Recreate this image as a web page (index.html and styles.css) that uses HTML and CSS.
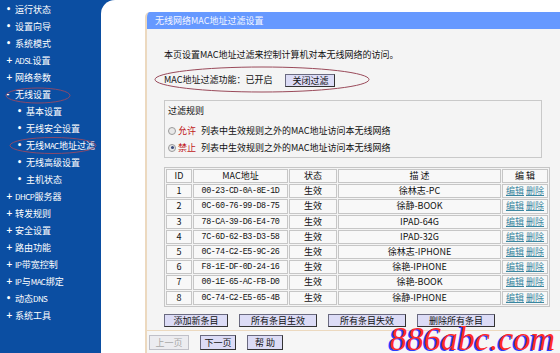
FILE: index.html
```html
<!DOCTYPE html>
<html lang="zh-CN">
<head>
<meta charset="utf-8">
<title>无线网络MAC地址过滤设置</title>
<link rel="stylesheet" href="styles.css">
</head>
<body>
<div class="page">
  <nav class="side">
    <ul class="menu">
      <li class="item"><span class="mk">•</span>运行状态</li>
      <li class="item"><span class="mk">•</span>设置向导</li>
      <li class="item"><span class="mk">•</span>系统模式</li>
      <li class="item"><span class="mk">+</span><span class="lat">ADSL</span>设置</li>
      <li class="item"><span class="mk">+</span>网络参数</li>
      <li class="item"><span class="mk">-</span>无线设置</li>
      <li class="item sub"><span class="mk">•</span>基本设置</li>
      <li class="item sub"><span class="mk">•</span>无线安全设置</li>
      <li class="item sub"><span class="mk">•</span>无线<span class="lat">MAC</span>地址过滤</li>
      <li class="item sub"><span class="mk">•</span>无线高级设置</li>
      <li class="item sub"><span class="mk">•</span>主机状态</li>
      <li class="item"><span class="mk">+</span><span class="lat">DHCP</span>服务器</li>
      <li class="item"><span class="mk">+</span>转发规则</li>
      <li class="item"><span class="mk">+</span>安全设置</li>
      <li class="item"><span class="mk">+</span>路由功能</li>
      <li class="item"><span class="mk">+</span><span class="lat">IP</span>带宽控制</li>
      <li class="item"><span class="mk">+</span><span class="lat">IP</span>与<span class="lat">MAC</span>绑定</li>
      <li class="item"><span class="mk">•</span>动态<span class="lat">DNS</span></li>
      <li class="item"><span class="mk">+</span>系统工具</li>
    </ul>
  </nav>
  <main class="main">
    <section class="panel">
      <div class="head">无线网络MAC地址过滤设置</div>
      <div class="body">
        <p class="intro">本页设置MAC地址过滤来控制计算机对本无线网络的访问。</p>
        <div class="status">MAC地址过滤功能：已开启<button class="btn btn-off">关闭过滤</button></div>
        <div class="rules">
          <div class="rules-title">过滤规则</div>
          <div class="radio-row"><span class="radio"></span><span class="red">允许</span>列表中生效规则之外的MAC地址访问本无线网络</div>
          <div class="radio-row"><span class="radio on"></span><span class="red">禁止</span>列表中生效规则之外的MAC地址访问本无线网络</div>
        </div>
        <table class="list">
          <colgroup>
            <col class="c-id"><col class="c-mac"><col class="c-st"><col class="c-desc"><col class="c-edit">
          </colgroup>
          <thead>
            <tr><th>ID</th><th>MAC地址</th><th>状态</th><th>描 述</th><th>编 辑</th></tr>
          </thead>
          <tbody>
            <tr><td>1</td><td class="mac">00-23-CD-0A-8E-1D</td><td>生效</td><td>徐林志-PC</td><td><a class="lk">编辑</a> <a class="lk">删除</a></td></tr>
            <tr><td>2</td><td class="mac">0C-60-76-99-D8-75</td><td>生效</td><td>徐静-BOOK</td><td><a class="lk">编辑</a> <a class="lk">删除</a></td></tr>
            <tr><td>3</td><td class="mac">78-CA-39-D6-E4-70</td><td>生效</td><td>IPAD-64G</td><td><a class="lk">编辑</a> <a class="lk">删除</a></td></tr>
            <tr><td>4</td><td class="mac">7C-6D-62-B3-D3-58</td><td>生效</td><td>IPAD-32G</td><td><a class="lk">编辑</a> <a class="lk">删除</a></td></tr>
            <tr><td>5</td><td class="mac">0C-74-C2-E5-9C-26</td><td>生效</td><td>徐林志-IPHONE</td><td><a class="lk">编辑</a> <a class="lk">删除</a></td></tr>
            <tr><td>6</td><td class="mac">F8-1E-DF-0D-24-16</td><td>生效</td><td>徐艳-IPHONE</td><td><a class="lk">编辑</a> <a class="lk">删除</a></td></tr>
            <tr><td>7</td><td class="mac">00-1E-65-AC-FB-D0</td><td>生效</td><td>徐艳-BOOK</td><td><a class="lk">编辑</a> <a class="lk">删除</a></td></tr>
            <tr><td>8</td><td class="mac">0C-74-C2-E5-65-4B</td><td>生效</td><td>徐静-IPHONE</td><td><a class="lk">编辑</a> <a class="lk">删除</a></td></tr>
          </tbody>
        </table>
        <div class="actions">
          <button class="btn b1">添加新条目</button>
          <button class="btn b2">所有条目生效</button>
          <button class="btn b2">所有条目失效</button>
          <button class="btn b2">删除所有条目</button>
        </div>
      </div>
      <div class="foot">
        <button class="btn nav disabled">上一页</button>
        <button class="btn nav">下一页</button>
        <button class="btn nav">帮 助</button>
      </div>
    </section>
  </main>
  <svg class="marks" width="560" height="353" viewBox="0 0 560 353">
    <ellipse cx="38" cy="95.5" rx="32" ry="7.5" fill="none" stroke="#8a4a6a" stroke-width="1"/>
    <ellipse cx="53" cy="145.5" rx="43" ry="8" fill="none" stroke="#8a4a6a" stroke-width="1"/>
    <ellipse cx="262" cy="79.5" rx="107" ry="12.5" fill="none" stroke="#9a4a5a" stroke-width="1"/>
  </svg>
  <div class="watermark">886abc.com</div>
</div>
</body>
</html>
```

FILE: styles.css
```css
* { box-sizing: border-box; }
html, body { margin: 0; padding: 0; }
body {
  width: 560px;
  height: 353px;
  overflow: hidden;
  background: #ffffff;
  font-family: "Noto Sans CJK SC", "Liberation Sans", sans-serif;
  font-size: 9px;
  color: #111;
}
.page {
  position: relative;
  display: flex;
  width: 560px;
  height: 353px;
  background: #0b4ea2;
}
.side {
  width: 101px;
  flex: none;
  background: #0b4ea2;
  color: #fff;
  overflow: hidden;
}
.menu {
  list-style: none;
  margin: 0;
  padding: 1px 0 0 0;
}
.item {
  height: 17px;
  line-height: 17px;
  padding-left: 6px;
  display: flex;
  align-items: center;
  white-space: nowrap;
}
.item.sub { padding-left: 17px; }
.lat {
  font-size: 8px;
  letter-spacing: -0.6px;
  margin-right: 0.5px;
}
.mk {
  display: inline-block;
  width: 9px;
  font-family: "DejaVu Sans", sans-serif;
  font-size: 8px;
  font-weight: bold;
  text-align: left;
}
.main {
  flex: 1;
  background: #fff;
  border-top-left-radius: 14px;
  padding: 12px 0 0 44px;
  display: flex;
}
.panel {
  flex: 1;
  display: flex;
  flex-direction: column;
  background: #f4f4f4;
  border-left: 2px solid #ecd9bf;
  border-top-left-radius: 5px;
  overflow: hidden;
}
.head {
  height: 17px;
  line-height: 17px;
  background: #6699ff;
  color: #f4f6ff;
  padding-left: 8px;
}
.body {
  padding: 0 0 0 17px;
  flex: 1;
}
.intro {
  margin: 20px 0 0 0;
  height: 12px;
  line-height: 12px;
}
.status {
  margin-top: 11px;
  height: 14px;
  display: flex;
  align-items: center;
}
.btn {
  font-family: "Noto Sans CJK SC", sans-serif;
  font-size: 9px;
  color: #111;
  background: #dcdcf6;
  border: 1px solid #6a6a80;
  border-right-color: #333;
  border-bottom-color: #333;
  padding: 0;
  height: 13px;
  line-height: 11px;
  margin: 0;
}
.btn-off {
  margin-left: 13px;
  width: 50px;
  margin-top: 2px;
}
.rules {
  margin-top: 14px;
  width: 378px;
  height: 58px;
  border: 1px solid #c9c9c9;
  padding: 1px 0 0 3px;
}
.rules-title {
  height: 17px;
  line-height: 17px;
}
.radio-row {
  height: 17px;
  line-height: 17px;
  display: flex;
  align-items: center;
}
.rules-title + .radio-row { margin-top: 3px; }
.radio {
  width: 8px;
  height: 8px;
  border-radius: 50%;
  border: 1px solid #9a9a9a;
  background: #e8e8e8;
  margin: 0 2px 0 0;
  position: relative;
}
.radio.on::after {
  content: "";
  position: absolute;
  left: 1.5px;
  top: 1.5px;
  width: 3px;
  height: 3px;
  border-radius: 50%;
  background: #3a4a7a;
}
.red { color: #c01818; margin-right: 5px; }
.list {
  margin-top: 9px;
  width: 378px;
  border: 1px solid #c6c6c6;
  border-spacing: 1px;
  border-collapse: separate;
  table-layout: fixed;
}
.c-id { width: 26px; }
.c-mac { width: 95px; }
.c-st { width: 48px; }
.c-desc { width: 163px; }
.c-edit { width: 46px; }
.list th, .list td {
  border: 1px solid #c6c6c6;
  height: 14.2px;
  padding: 0;
  line-height: 12px;
  text-align: center;
  font-weight: normal;
  background: #f8f8f8;
  white-space: nowrap;
  overflow: hidden;
}
.list .mac {
  font-family: "Liberation Mono", monospace;
  font-size: 8.4px;
  letter-spacing: -0.45px;
}
.lk {
  color: #3a86a0;
  text-decoration: underline;
}
.actions {
  margin-top: 7px;
  display: flex;
  gap: 11px;
}
.b1 { width: 64px; }
.b2 { width: 78px; }
.foot {
  height: 23px;
  border-top: 1px solid #ecd9bf;
  margin-top: 2px;
  background: #f6f6f6;
  display: flex;
  gap: 11px;
  padding: 4px 0 0 2px;
}
.nav {
  height: 15px;
  width: 36px;
}
.nav.disabled {
  color: #a8a8a8;
  background: #ececf0;
  border-color: #c0c0c8;
  width: 40px;
}
.marks {
  position: absolute;
  left: 0;
  top: 0;
  pointer-events: none;
}
.watermark {
  position: absolute;
  right: 5px;
  bottom: 2px;
  font-family: "Liberation Serif", serif;
  font-style: italic;
  font-size: 34px;
  line-height: 24px;
  height: 24px;
  color: #ff2a2a;
  text-shadow: -2px 1px 0 #2b3cff;
  letter-spacing: 0;
}
```
